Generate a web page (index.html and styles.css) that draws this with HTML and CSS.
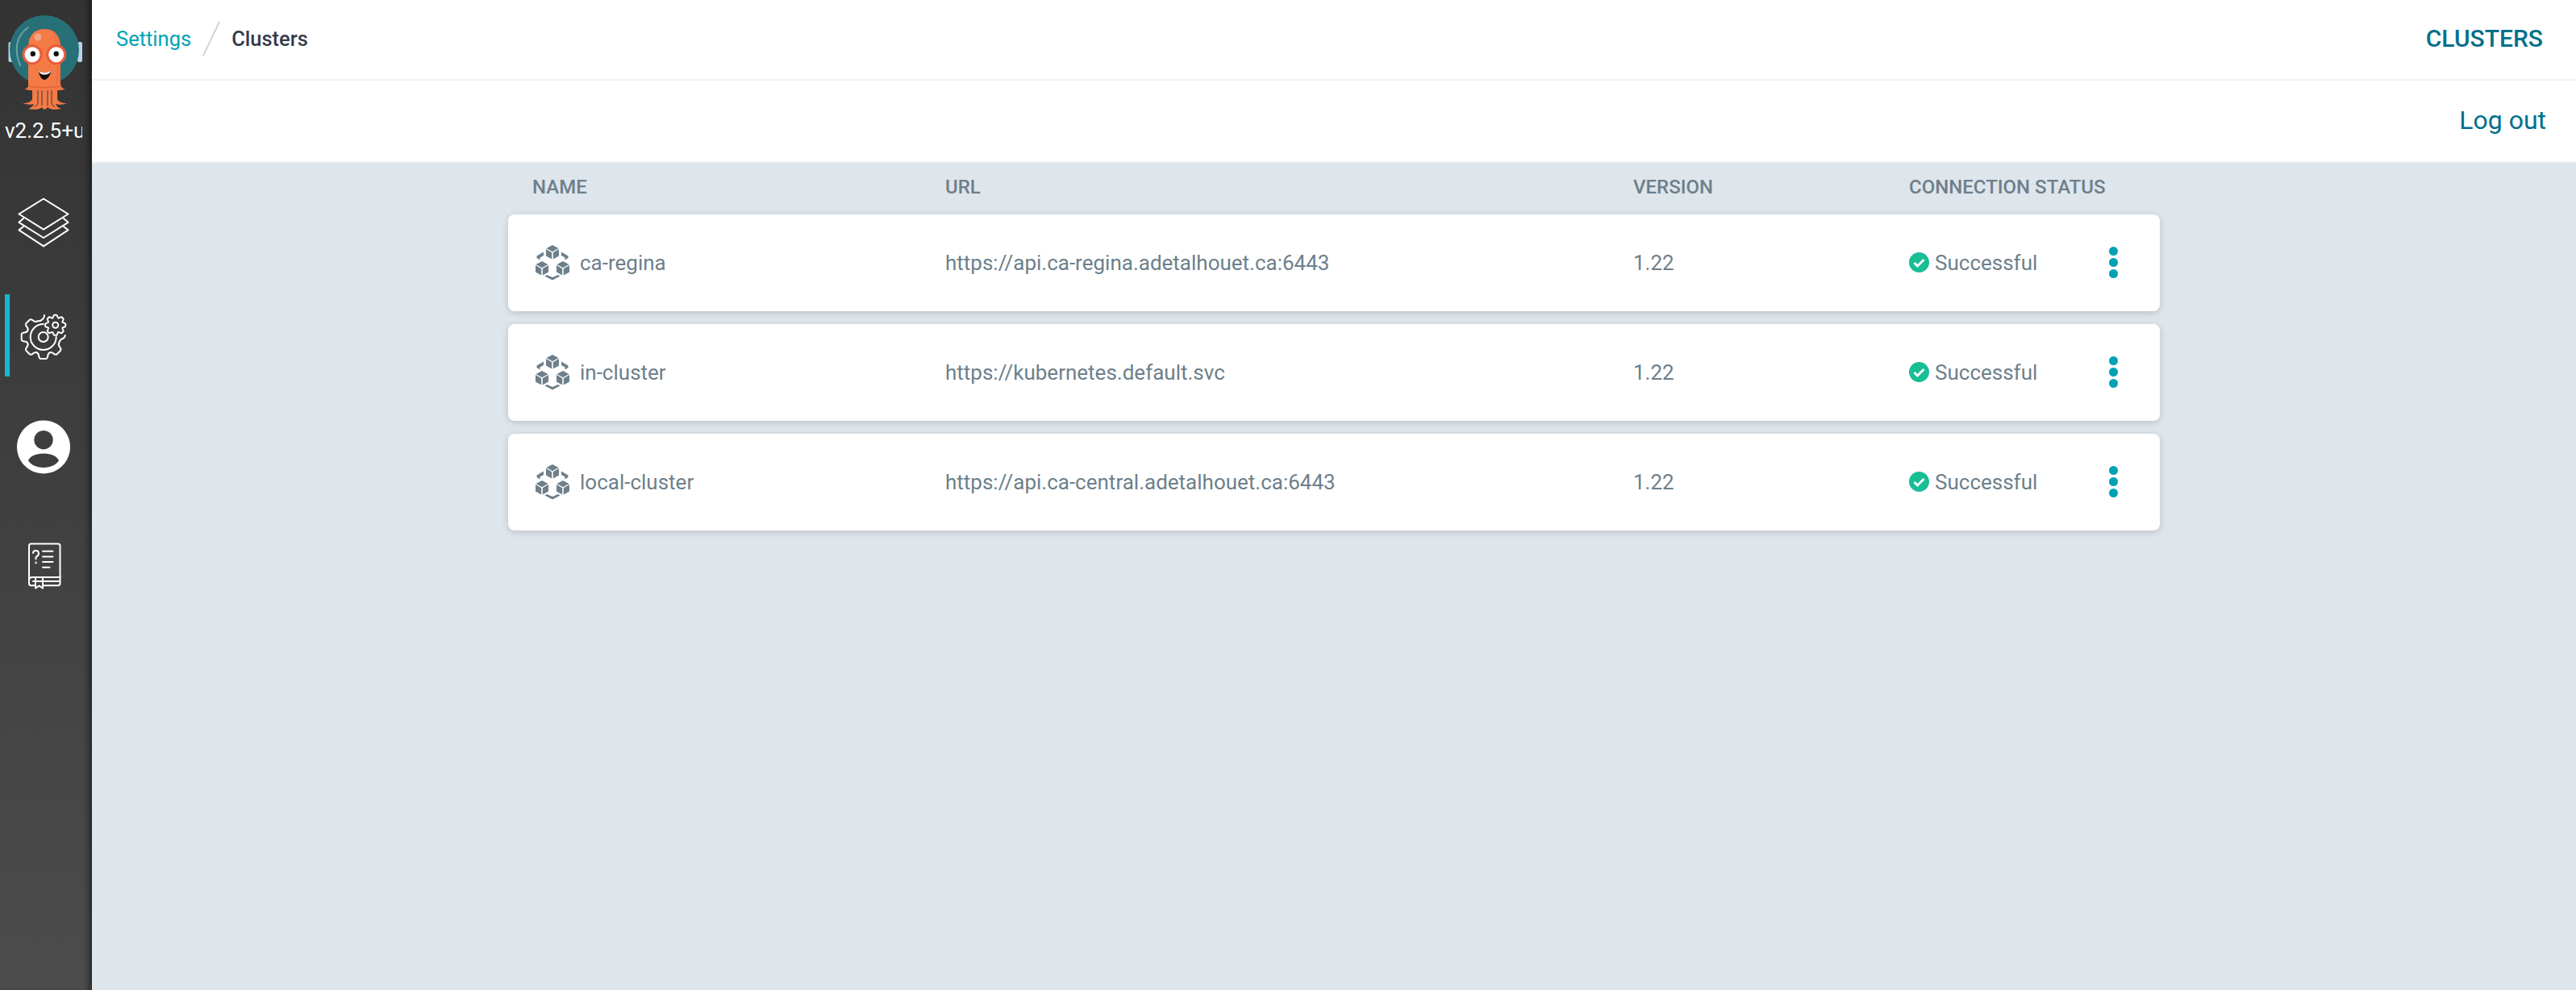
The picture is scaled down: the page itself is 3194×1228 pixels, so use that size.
FILE: index.html
```html
<!DOCTYPE html>
<html>
<head>
<title>Settings - Clusters</title>
<link rel="stylesheet" href="styles.css">
</head>
<body>
<div class="app">
  <nav class="sidebar">
    <svg class="logo" viewBox="0 0 114 140" width="114" height="140">
      <rect class="phones" x="10.5" y="52" width="6" height="25" rx="2"/>
      <rect class="phones" x="96" y="52" width="6" height="25" rx="2"/>
      <circle cx="55" cy="62" r="43" fill="#287078"/>
      <path d="M25 81 C17 62 20 44 35 34" fill="none" stroke="#6ea3a8" stroke-width="2" stroke-linecap="round"/>
      <path class="octo" d="M35 58 C35 44 43 36 55 36 C67 36 75 44 75 58 L75 106 L35 106 Z"/>
      <path d="M64 37 C71 41 75 49 75 58 L75 104 L68 106 C72 80 72 55 64 37 Z" fill="#ee6e3f" opacity=".6"/>
      <path class="octo" d="M30 110.5 C34 110 36 107 36 103 L75 103 C75 107 77 110 81 110.5 C77 112 73 112 71 112 L71 123 C72 126 77 128 83 128.5 C77 130 72 130 69 129 C70 132 73 134 76 135 C70 136.5 62 136 59 133 C57 136 54 137 52 133 C49 136 41 136.5 35 135 C38 134 41 132 42 129 C39 130 34 130 28 128.5 C34 128 39 126 40 123 L40 112 C38 112 34 112 30 110.5 Z"/>
      <path d="M47 112 V127 C47 130 45 132 43 132 M64 112 V127 C64 130 66 132 68 132 M52 112 V131 M59 112 V131" fill="none" stroke="#3a3a3a" stroke-width="1"/>
      <path d="M36 107 C48 109 62 109 75 107" fill="none" stroke="#e2633a" stroke-width="1.5"/>
      <circle cx="47" cy="46" r="4.5" fill="#f6a486"/>
      <circle class="eye-ring" cx="40" cy="67.7" r="11"/>
      <circle class="eye-ring" cx="69.7" cy="67.7" r="11"/>
      <circle cx="40.8" cy="66.7" r="3.2" fill="#111"/>
      <circle cx="69.7" cy="66.7" r="3.2" fill="#111"/>
      <path d="M47.5 87.5 C53 91 57 91 63.5 87.5 C62 95 58 99 55 99 C52 99 49 95 47.5 87.5 Z" fill="#111"/>
      <path d="M47.5 87.5 C53 91 57 91 63.5 87.5 C62 91 60 92.5 55 92.5 C51 92.5 49 91 47.5 87.5 Z" fill="#fff"/>
    </svg>
    <div class="version">v2.2.5+unknown</div>
    <ul class="nav-list">
      <li class="nav-item">
        <svg class="nav-icon" viewBox="0 0 114 100">
          <path d="M54 17.5 L84.5 36.5 L54 55.7 L23.5 36.5 Z"/>
          <path d="M29 42 L23.5 46.8 L54 66 L84.5 46.8 L79 42"/>
          <path d="M29 52 L23.5 56.4 L54 76.4 L84.5 56.4 L79 52"/>
        </svg>
      </li>
      <li class="nav-item active">
        <svg class="nav-icon" viewBox="0 0 114 100">
          <defs>
            <path id="big-tooth" d="M-8 -19.4 C-5 -20 -6 -24 -5 -25.5 Q-4.5 -27 -3 -27 H3 Q4.5 -27 5 -25.5 C6 -24 5 -20 8 -19.4"/>
            <path id="small-tooth" d="M-3.6 -8.8 C-2.5 -9 -2.6 -12.5 -1.5 -12.5 H1.5 C2.6 -12.5 2.5 -9 3.6 -8.8"/>
          </defs>
          <g transform="translate(53.7 53)">
            <use href="#big-tooth" transform="rotate(135)"/>
            <use href="#big-tooth" transform="rotate(180)"/>
            <use href="#big-tooth" transform="rotate(225)"/>
            <use href="#big-tooth" transform="rotate(270)"/>
            <use href="#big-tooth" transform="rotate(315)"/>
            <path d="M-8 -19.4 C-5 -20 -4 -19 -1 -22 C1 -24 2 -27 1 -27 M19.4 8 C20 5 21 3 24 2 C26 1 27 0 27 -2"/>
            <path d="M0 -16 A16 16 0 1 0 16 0"/>
            <circle r="6"/>
          </g>
          <g transform="translate(68.7 38.2)">
            <use href="#small-tooth"/>
            <use href="#small-tooth" transform="rotate(45)"/>
            <use href="#small-tooth" transform="rotate(90)"/>
            <use href="#small-tooth" transform="rotate(135)"/>
            <use href="#small-tooth" transform="rotate(180)"/>
            <use href="#small-tooth" transform="rotate(225)"/>
            <use href="#small-tooth" transform="rotate(270)"/>
            <use href="#small-tooth" transform="rotate(315)"/>
            <circle r="3.5"/>
          </g>
        </svg>
      </li>
      <li class="nav-item">
        <svg class="nav-icon" viewBox="0 0 114 100">
          <path class="solid" fill-rule="evenodd" d="M54 20.4 a33 33 0 1 0 0.01 0 Z M54 33 a11.7 11.7 0 1 0 0.01 0 Z M54 61.6 C44 61.6 37 65.5 35 70.3 C38 75.5 45 78.9 54 78.9 C63 78.9 70 75.5 73 70.3 C71 65.5 64 61.6 54 61.6 Z"/>
        </svg>
      </li>
      <li class="nav-item">
        <svg class="nav-icon" viewBox="0 0 114 100">
          <path d="M44 89.2 H38 Q36 89.2 36 86.5 V40 Q36 37.5 38.5 37.5 H72 Q74.5 37.5 74.5 40 V86.5 Q74.5 89.2 72 89.2 H53"/>
          <path d="M36 83 Q36 78.9 40 78.9 H74.5 M41 84 H74 M44 80 V92.6 L48.5 89.5 L53 92.6 V80"/>
          <path d="M53 46.8 H65.5 M53 53.4 H65.5 M53 59.9 H65.5 M53 66.8 H61.5"/>
          <path d="M41 49 Q41 46 44.5 46 Q48 46 48 49.5 Q48 52 44.5 54 V56.5 M44.5 60.5 V61.5"/>
        </svg>
      </li>
    </ul>
  </nav>

  <div class="content">
    <header class="top-bar">
      <div class="breadcrumbs">
        <a class="crumb-link">Settings</a>
        <svg class="crumb-sep" viewBox="0 0 22 44" width="22" height="44"><path d="M21 1 L1 43"/></svg>
        <span class="crumb-current">Clusters</span>
      </div>
      <div class="page-title">CLUSTERS</div>
    </header>
    <div class="tool-bar">
      <a class="logout">Log out</a>
    </div>

    <main class="main">
      <div class="clusters">
        <div class="row head-row">
          <div>NAME</div>
          <div>URL</div>
          <div>VERSION</div>
          <div>CONNECTION STATUS</div>
        </div>

        <div class="row card">
          <div class="name-cell">
            <svg class="cluster-icon" viewBox="0 0 42 44"><use href="#cluster-shape"/></svg>
            ca-regina
          </div>
          <div>https://api.ca-regina.adetalhouet.ca:6443</div>
          <div>1.22</div>
          <div class="status-cell">
            <span class="status">
              <svg class="check" viewBox="0 0 25 25"><circle cx="12.5" cy="12.5" r="12.5"/><path d="M6.5 13 L10.5 17 L18.5 9"/></svg>
              Successful
            </span>
            <span class="dots"><i></i><i></i><i></i></span>
          </div>
        </div>

        <div class="row card">
          <div class="name-cell">
            <svg class="cluster-icon" viewBox="0 0 42 44"><use href="#cluster-shape"/></svg>
            in-cluster
          </div>
          <div>https://kubernetes.default.svc</div>
          <div>1.22</div>
          <div class="status-cell">
            <span class="status">
              <svg class="check" viewBox="0 0 25 25"><circle cx="12.5" cy="12.5" r="12.5"/><path d="M6.5 13 L10.5 17 L18.5 9"/></svg>
              Successful
            </span>
            <span class="dots"><i></i><i></i><i></i></span>
          </div>
        </div>

        <div class="row card">
          <div class="name-cell">
            <svg class="cluster-icon" viewBox="0 0 42 44"><use href="#cluster-shape"/></svg>
            local-cluster
          </div>
          <div>https://api.ca-central.adetalhouet.ca:6443</div>
          <div>1.22</div>
          <div class="status-cell">
            <span class="status">
              <svg class="check" viewBox="0 0 25 25"><circle cx="12.5" cy="12.5" r="12.5"/><path d="M6.5 13 L10.5 17 L18.5 9"/></svg>
              Successful
            </span>
            <span class="dots"><i></i><i></i><i></i></span>
          </div>
        </div>
      </div>
    </main>
  </div>
</div>

<svg class="defs" width="0" height="0">
  <defs>
    <g id="cluster-shape">
      <g id="cube">
        <polygon points="21,0 28.5,4 21,8.2 13.5,4"/>
        <polygon points="13,5 20.2,9.3 20.2,17.5 13,13.5"/>
        <polygon points="29,5 21.8,9.3 21.8,17.5 29,13.5"/>
      </g>
      <use href="#cube" x="-13" y="20"/>
      <use href="#cube" x="13" y="20"/>
      <polygon points="10,8.5 10,13 5.5,15.5 5.5,18.5 1.5,16 1.5,13.5"/>
      <polygon points="32,8.5 32,13 36.5,15.5 36.5,18.5 40.5,16 40.5,13.5"/>
      <polygon points="11.5,38.5 14,37 21,40 28,37 30.5,38.5 21,43.5"/>
    </g>
  </defs>
</svg>
</body>
</html>
```

FILE: styles.css
```css
* {
  box-sizing: border-box;
}
body {
  margin: 0;
  font-family: Roboto, "Liberation Sans", sans-serif;
  color: #6d7f8b;
  background: #dee5eb;
}
.defs {
  position: absolute;
}
.app {
  display: flex;
  height: 1228px;
  overflow: hidden;
}

/* sidebar */
.sidebar {
  width: 114px;
  flex: none;
  background: linear-gradient(180deg, #333 0%, #4c4c4c 100%);
  box-shadow: inset -9px 0 8px -6px rgba(0, 0, 0, 0.55);
}
.logo {
  display: block;
}
.phones {
  fill: #b5d3ec;
}
.octo {
  fill: #f47a46;
}
.eye-ring {
  fill: #fff;
  stroke: #ea5b3b;
  stroke-width: 3;
}
.version {
  width: 96px;
  margin-left: 6px;
  overflow: hidden;
  white-space: nowrap;
  color: #fff;
  font-size: 26px;
  line-height: 44px;
}
.nav-list {
  list-style: none;
  margin: 45px 0 0;
  padding: 0;
}
.nav-item {
  position: relative;
  height: 100px;
  margin-bottom: 36px;
}
.nav-item.active::before {
  content: "";
  position: absolute;
  left: 6px;
  top: 0;
  width: 6px;
  height: 102px;
  background: #18b7cf;
}
.nav-icon {
  display: block;
  width: 114px;
  height: 100px;
  fill: none;
  stroke: #fff;
  stroke-width: 2;
  stroke-linejoin: round;
  stroke-linecap: round;
}
.nav-icon .solid {
  fill: #fff;
  stroke: none;
}

/* top bars */
.content {
  flex: 1;
  min-width: 0;
}
.top-bar {
  display: flex;
  align-items: center;
  justify-content: space-between;
  height: 100px;
  padding: 0 41px 2px 30px;
  background: #fff;
  border-bottom: 2px solid #eff3f6;
}
.breadcrumbs {
  display: flex;
  align-items: center;
  font-size: 25.5px;
}
.crumb-link {
  color: #00a2b3;
}
.crumb-sep {
  margin: 0 14px;
  fill: none;
  stroke: #ccd6dd;
  stroke-width: 2;
}
.crumb-current {
  color: #363c4a;
  font-weight: 500;
}
.page-title {
  font-size: 30px;
  font-weight: 500;
  color: #006f8a;
  padding-bottom: 2px;
}
.tool-bar {
  display: flex;
  align-items: center;
  justify-content: flex-end;
  height: 102px;
  padding: 0 37px 2px 0;
  background: #fff;
  border-bottom: 2px solid #eff3f6;
}
.logout {
  font-size: 32px;
  color: #006f8a;
}

/* table */
.clusters {
  width: 2048px;
  margin: 0 auto;
}
.row {
  display: grid;
  grid-template-columns: 512px 853px 342px 1fr;
  align-items: center;
  padding-left: 30px;
}
.head-row {
  height: 64px;
  padding-bottom: 4px;
  font-size: 24px;
  font-weight: 500;
}
.card {
  height: 120px;
  margin-bottom: 16px;
  font-size: 26px;
  background: #fff;
  border-radius: 8px;
  box-shadow: 0 2px 8px rgba(0, 0, 0, 0.16);
}
.name-cell {
  display: flex;
  align-items: center;
}
.cluster-icon {
  width: 42px;
  height: 44px;
  margin: 0 13px 0 4px;
  fill: #6d7f8b;
}
.status-cell {
  display: flex;
  align-items: center;
  justify-content: space-between;
  padding-right: 52px;
}
.status {
  display: flex;
  align-items: center;
}
.check {
  width: 25px;
  height: 25px;
  margin: 0 7px 2px 0;
}
.check circle {
  fill: #18be94;
}
.check path {
  fill: none;
  stroke: #fff;
  stroke-width: 3;
}
.dots {
  display: flex;
  flex-direction: column;
  gap: 3px;
  margin-bottom: 2px;
}
.dots i {
  display: block;
  width: 11px;
  height: 11px;
  border-radius: 50%;
  background: #00a2b3;
}
```
